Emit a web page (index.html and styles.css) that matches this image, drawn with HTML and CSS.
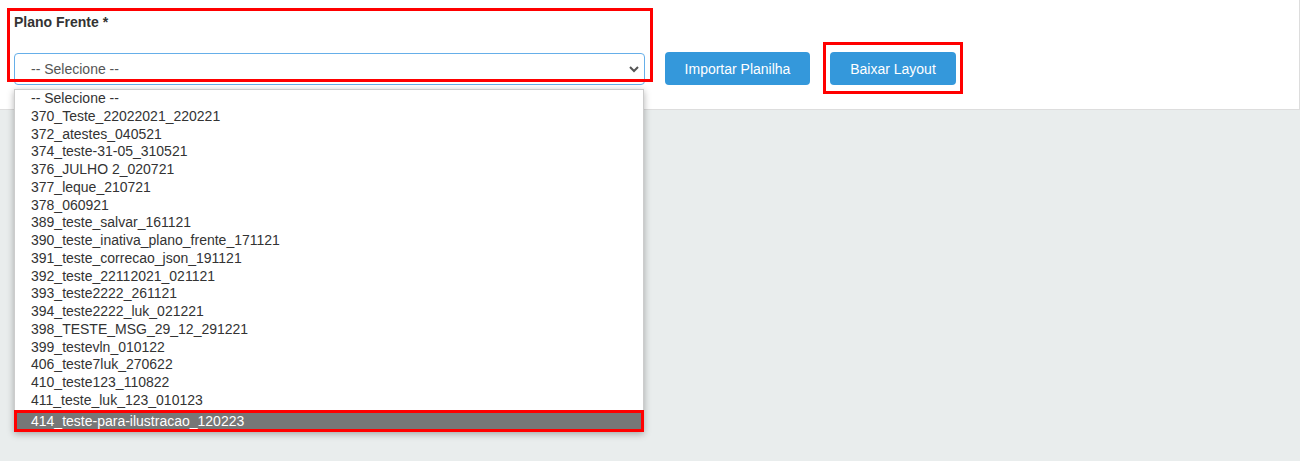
FILE: index.html
```html
<!DOCTYPE html>
<html lang="pt-BR">
<head>
<meta charset="utf-8">
<title>Plano Frente</title>
<link rel="stylesheet" href="styles.css">
</head>
<body>
<div class="panel">
  <div class="field">
    <label class="field-label">Plano Frente *</label>
    <div class="select-wrap">
      <div class="select">
        <span>-- Selecione --</span>
        <svg class="chevron" width="10" height="7" viewBox="0 0 10 7"><polyline points="1,1 5,5 9,1" fill="none" stroke="#555" stroke-width="2"/></svg>
      </div>
      <ul class="options">
        <li>-- Selecione --</li>
        <li>370_Teste_22022021_220221</li>
        <li>372_atestes_040521</li>
        <li>374_teste-31-05_310521</li>
        <li>376_JULHO 2_020721</li>
        <li>377_leque_210721</li>
        <li>378_060921</li>
        <li>389_teste_salvar_161121</li>
        <li>390_teste_inativa_plano_frente_171121</li>
        <li>391_teste_correcao_json_191121</li>
        <li>392_teste_22112021_021121</li>
        <li>393_teste2222_261121</li>
        <li>394_teste2222_luk_021221</li>
        <li>398_TESTE_MSG_29_12_291221</li>
        <li>399_testevln_010122</li>
        <li>406_teste7luk_270622</li>
        <li>410_teste123_110822</li>
        <li>411_teste_luk_123_010123</li>
        <li class="selected">414_teste-para-ilustracao_120223</li>
      </ul>
    </div>
  </div>
  <button class="btn btn-import">Importar Planilha</button>
  <button class="btn btn-layout">Baixar Layout</button>
</div>
</body>
</html>
```

FILE: styles.css
```css
* { box-sizing: border-box; }

body {
  margin: 0;
  background: #e9eded;
  font-family: "Liberation Sans", Arial, sans-serif;
  font-size: 14px;
  height: 461px;
}

.panel {
  background: #fff;
  border-right: 1px solid #ddd;
  border-bottom: 1px solid #ddd;
  height: 110px;
  padding: 12px 0 24px 14px;
  display: flex;
  align-items: flex-end;
  gap: 20px;
}

.field {
  position: relative;
  width: 631px;
  display: flex;
  flex-direction: column;
}

.field::after {
  content: "";
  position: absolute;
  top: -4px;
  left: -7px;
  right: -8px;
  bottom: 3px;
  border: 3px solid #f00;
  pointer-events: none;
  z-index: 2;
}

.field-label {
  font-weight: bold;
  color: #333;
  line-height: 20px;
  margin-bottom: 21px;
}

.select-wrap {
  position: relative;
}

.select {
  height: 32px;
  border: 1px solid #66afe9;
  border-radius: 4px;
  padding: 0 5px 0 16px;
  color: #555;
  display: flex;
  align-items: center;
  justify-content: space-between;
  line-height: 20px;
}

.chevron {
  margin-top: 1px;
}

.options {
  position: absolute;
  top: 36px;
  left: 0;
  width: 630px;
  margin: 0;
  padding: 0;
  list-style: none;
  background: #fff;
  border: 1px solid #ccc;
  box-shadow: 0 2px 7px rgba(0, 0, 0, 0.3);
  z-index: 3;
}

.options li {
  height: 17.75px;
  line-height: 17.75px;
  padding-left: 16px;
  color: #333;
  white-space: nowrap;
}

.options li.selected {
  height: 22px;
  line-height: 16px;
  margin: 0 -1px -1px;
  padding-left: 14px;
  background: #777;
  color: #fff;
  border: 3px solid #f00;
}

.btn {
  position: relative;
  height: 33px;
  padding: 0;
  border: 0;
  border-radius: 4px;
  background: #3498db;
  color: #fff;
  font-family: "Liberation Sans", Arial, sans-serif;
  font-size: 14px;
  text-align: center;
  cursor: pointer;
}

.btn-import { width: 145px; }

.btn-layout { width: 126px; }

.btn-layout::after {
  content: "";
  position: absolute;
  top: -10px;
  bottom: -9px;
  left: -7px;
  right: -7px;
  border: 3px solid #f00;
  pointer-events: none;
}
```
